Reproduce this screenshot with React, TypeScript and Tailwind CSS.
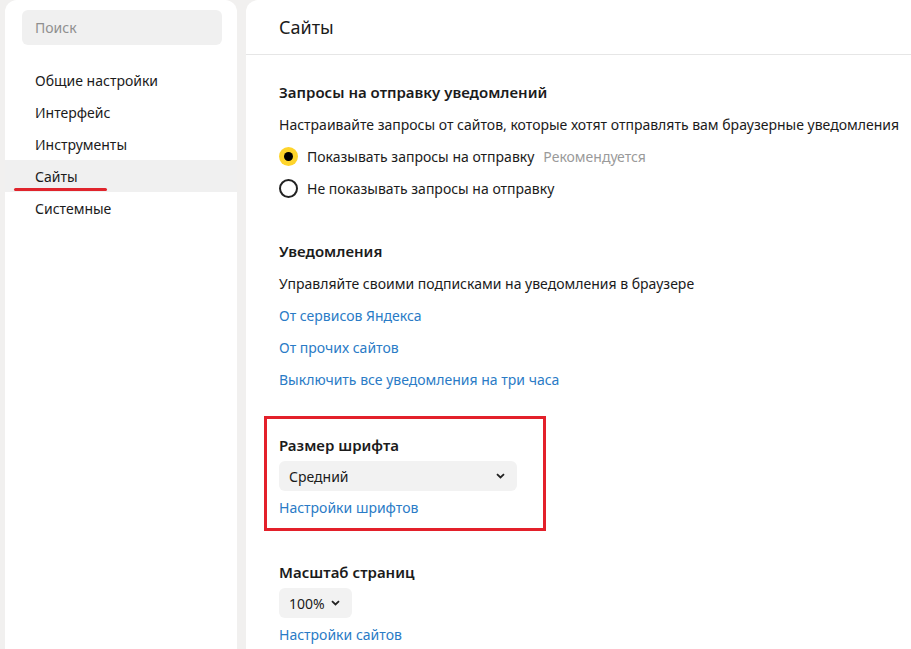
import React from "react";

const font = { fontFamily: '"Segoe UI", "Noto Sans", sans-serif' };

function Radio({ checked }: { checked: boolean }) {
  if (checked) {
    return (
      <span className="flex h-[19px] w-[19px] shrink-0 items-center justify-center rounded-full bg-[#fed42b]">
        <span className="h-[9px] w-[9px] rounded-full bg-black" />
      </span>
    );
  }
  return <span className="h-[19px] w-[19px] shrink-0 rounded-full border-2 border-[#222]" />;
}

function Chevron() {
  return (
    <svg width="9" height="6" viewBox="0 0 9 6" fill="none">
      <path d="M1 1.2 4.5 4.5 8 1.2" stroke="#222" strokeWidth="1.8" />
    </svg>
  );
}

function Link({ children }: { children: React.ReactNode }) {
  return <div className="flex h-8 items-center text-[#2a7bc6]">{children}</div>;
}

const menu = ["Общие настройки", "Интерфейс", "Инструменты", "Сайты", "Системные"];

export default function App() {
  return (
    <div className="flex h-[649px] w-[911px] gap-[9px] overflow-hidden bg-[#f1f0ef] pl-[5px] text-[14px] text-[#1b1b1b]" style={font}>
      <aside className="flex w-[232px] shrink-0 flex-col rounded-t-[12px] bg-white">
        <div className="pl-[17px] pr-[15px] pt-[10px]">
          <div className="flex h-[35px] items-center rounded-[6px] bg-[#f0f0f0] px-[13px] text-[#8f8f8f]">Поиск</div>
        </div>
        <nav className="mt-[19px] flex flex-col">
          {menu.map((m) => (
            <div key={m} className={`relative flex h-8 items-center pl-[30px] ${m === "Сайты" ? "bg-[#f0f0f0]" : ""}`}>
              {m}
              {m === "Сайты" && (
                <span className="absolute left-[9px] top-[28px] h-[3px] w-[93px] rounded-full bg-[#e0242c]" />
              )}
            </div>
          ))}
        </nav>
      </aside>
      <main className="flex min-w-0 flex-1 flex-col rounded-tl-[12px] bg-white">
        <header className="flex h-[55px] shrink-0 items-center border-b border-[#e6e6e6] pl-[33px] text-[18px]">Сайты</header>
        <div className="flex flex-col pl-[18px] pt-[21px]">
          <section className="flex flex-col pl-[15px]">
            <div className="flex h-8 items-center text-[15px] font-semibold">Запросы на отправку уведомлений</div>
            <div className="flex h-8 items-center whitespace-nowrap">Настраивайте запросы от сайтов, которые хотят отправлять вам браузерные уведомления</div>
            <div className="flex h-8 items-center gap-[9px]">
              <Radio checked />
              <span>Показывать запросы на отправку</span>
              <span className="text-[#9a9a9a]">Рекомендуется</span>
            </div>
            <div className="flex h-8 items-center gap-[9px]">
              <Radio checked={false} />
              <span>Не показывать запросы на отправку</span>
            </div>
          </section>
          <section className="mt-[31px] flex flex-col pl-[15px]">
            <div className="flex h-8 items-center text-[15px] font-semibold">Уведомления</div>
            <div className="flex h-8 items-center">Управляйте своими подписками на уведомления в браузере</div>
            <Link>От сервисов Яндекса</Link>
            <Link>От прочих сайтов</Link>
            <Link>Выключить все уведомления на три часа</Link>
          </section>
          <section className="mt-[21px] flex w-[282px] flex-col border-[3px] border-[#e3202a] pb-[5px] pl-[12px] pt-[10px]">
            <div className="flex h-8 items-center text-[15px] font-semibold">Размер шрифта</div>
            <div className="flex h-[30px] w-[238px] items-center justify-between rounded-[6px] bg-[#f2f2f2] pl-[10px] pr-[12px]">
              <span>Средний</span>
              <Chevron />
            </div>
            <Link>Настройки шрифтов</Link>
          </section>
          <section className="mt-[25px] flex flex-col pl-[15px]">
            <div className="flex h-8 items-center text-[15px] font-semibold">Масштаб страниц</div>
            <div className="flex h-[30px] w-[73px] items-center gap-[6px] rounded-[6px] bg-[#f2f2f2] pl-[10px]">
              <span>100%</span>
              <Chevron />
            </div>
            <Link>Настройки сайтов</Link>
          </section>
        </div>
      </main>
    </div>
  );
}
